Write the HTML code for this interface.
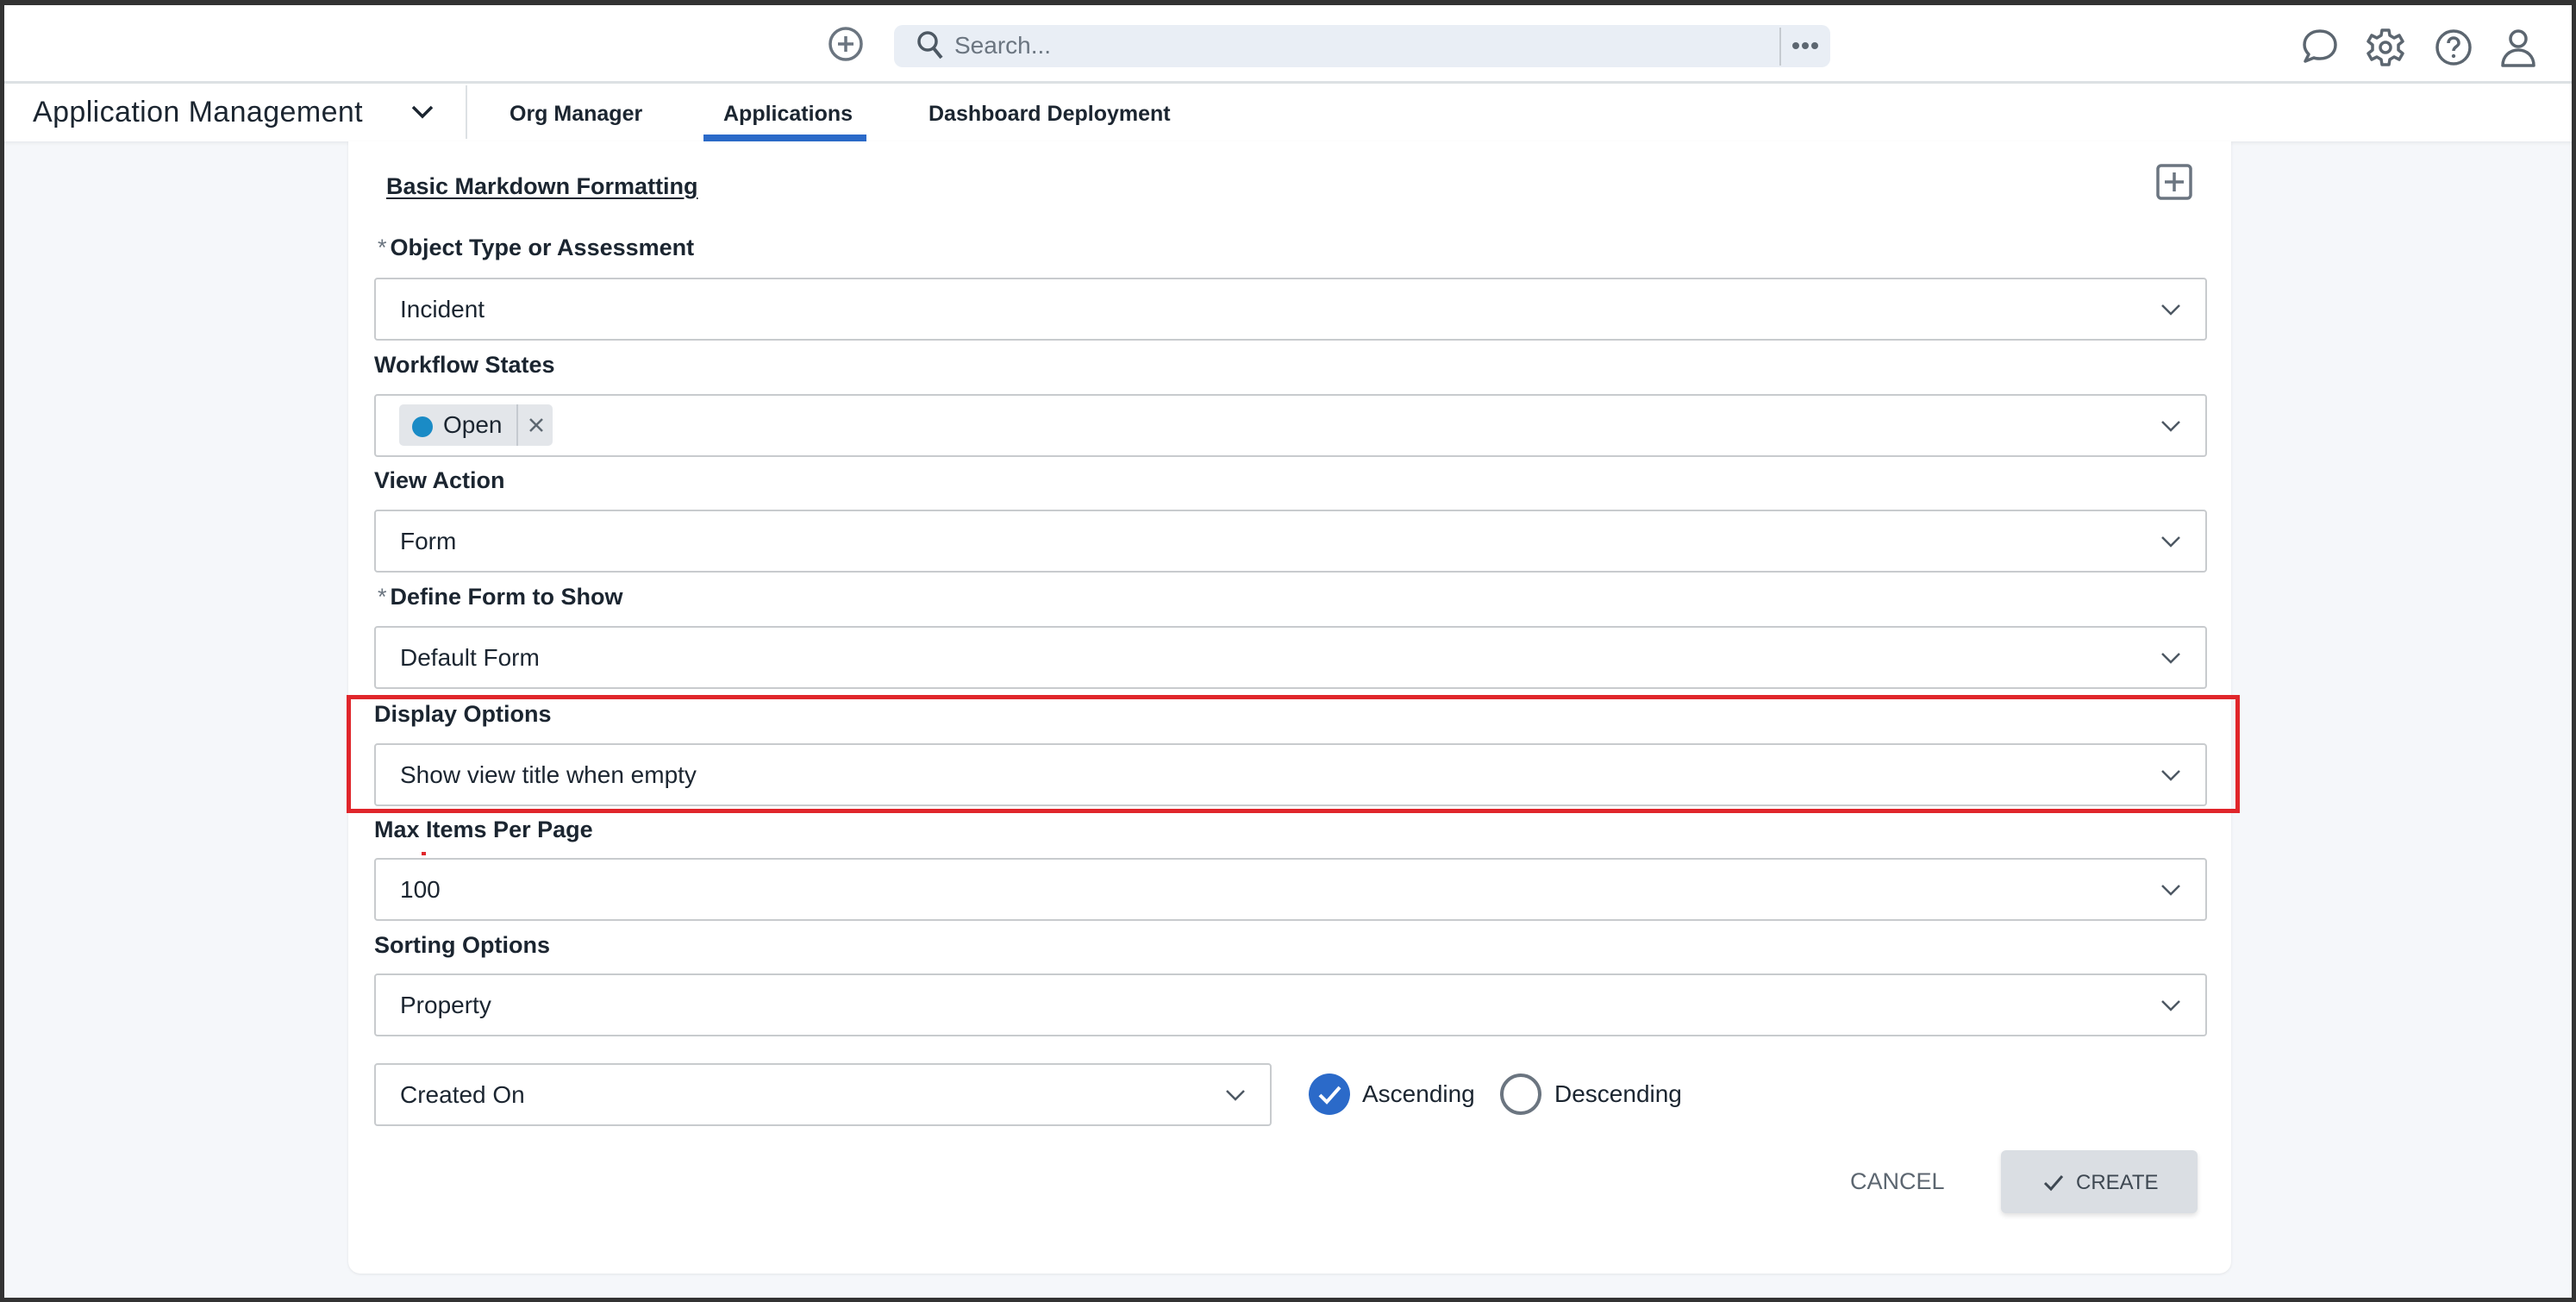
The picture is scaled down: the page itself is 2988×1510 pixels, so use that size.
<!DOCTYPE html>
<html><head><meta charset="utf-8"><style>
*{box-sizing:border-box;margin:0;padding:0}
body{width:2988px;height:1510px;overflow:hidden;font-family:"Liberation Sans",sans-serif;color:#1b2530;background:#f5f7fa;position:relative}
.frame{position:absolute;inset:0;border:5px solid #333;border-top-width:6px;pointer-events:none;z-index:10}
.top{position:absolute;left:0;top:0;width:2988px;height:97px;background:#fff;border-bottom:3px solid #dde1e4}
.nav{position:absolute;left:0;top:97px;width:2988px;height:67px;background:#fff;box-shadow:0 2px 4px rgba(0,0,0,.06)}
.abs{position:absolute}
.card{position:absolute;left:404px;top:164px;width:2184px;height:1313px;background:#fff;border-radius:0 0 14px 14px;box-shadow:0 1px 3px rgba(0,0,0,.08)}
.lbl{position:absolute;left:434px;font-size:27px;font-weight:bold;color:#1b2530}
.inp{position:absolute;left:434px;width:2126px;height:73px;border:2px solid #c8cbce;border-radius:4px;background:#fff}
.inp span.t{position:absolute;left:28px;top:50%;transform:translateY(-50%);font-size:28px;color:#1b2530}
.chev{position:absolute;right:28px;top:50%;transform:translateY(-50%)}
.tab{position:absolute;top:118px;font-size:25px;font-weight:bold;color:#1b2530}
</style></head><body>
<div class="top"></div>
<svg class="abs" style="left:960px;top:30px" width="42" height="42" viewBox="0 0 42 42"><circle cx="21" cy="21" r="18" fill="none" stroke="#6b7580" stroke-width="3.5"/><path d="M21 12v18M12 21h18" stroke="#6b7580" stroke-width="3.5"/></svg>
<div class="abs" style="left:1037px;top:29px;width:1086px;height:49px;background:#e9eef5;border-radius:10px"></div>
<svg class="abs" style="left:1062px;top:34px" width="36" height="38" viewBox="0 0 36 38"><circle cx="14" cy="14" r="10" fill="none" stroke="#4d5863" stroke-width="3.5"/><path d="M21 22l9 11" stroke="#4d5863" stroke-width="4"/></svg>
<div class="abs" style="left:1107px;top:37px;font-size:28px;color:#6b7580">Search...</div>
<div class="abs" style="left:2064px;top:32px;width:2px;height:44px;background:#c5cad0"></div>
<svg class="abs" style="left:2078px;top:46px" width="32" height="14" viewBox="0 0 32 14"><circle cx="5" cy="7" r="4" fill="#5c6670"/><circle cx="16" cy="7" r="4" fill="#5c6670"/><circle cx="27" cy="7" r="4" fill="#5c6670"/></svg>
<svg class="abs" style="left:2667px;top:30px" width="48" height="48" viewBox="0 0 48 48"><path d="M24 6C13 6 6 13 6 22c0 5 2 8 5 11l-4 8 10-4c2 1 5 1 7 1 11 0 18-7 18-16S35 6 24 6z" fill="none" stroke="#5c6670" stroke-width="3.5" stroke-linejoin="round"/></svg>
<svg class="abs" style="left:2744px;top:32px" width="46" height="46" viewBox="0 0 46 46"><path d="M19 3h8l1 6 5 3 6-3 4 7-5 4v6l5 4-4 7-6-3-5 3-1 6h-8l-1-6-5-3-6 3-4-7 5-4v-6l-5-4 4-7 6 3 5-3z" fill="none" stroke="#5c6670" stroke-width="3.5" stroke-linejoin="round"/><circle cx="23" cy="23" r="6" fill="none" stroke="#5c6670" stroke-width="3.5"/></svg>
<svg class="abs" style="left:2823px;top:32px" width="46" height="46" viewBox="0 0 46 46"><circle cx="23" cy="23" r="19" fill="none" stroke="#5c6670" stroke-width="3.5"/><path d="M17 18c0-4 3-6 6-6s6 2 6 6c0 4-6 4-6 9" fill="none" stroke="#5c6670" stroke-width="3.5"/><circle cx="23" cy="33" r="2.2" fill="#5c6670"/></svg>
<svg class="abs" style="left:2899px;top:32px" width="44" height="48" viewBox="0 0 44 48"><circle cx="22" cy="13" r="9" fill="none" stroke="#5c6670" stroke-width="3.5"/><path d="M4 44c0-11 8-18 18-18s18 7 18 18z" fill="none" stroke="#5c6670" stroke-width="3.5" stroke-linejoin="round"/></svg>

<div class="nav"></div>
<div class="abs" style="left:38px;top:111px;font-size:34px;color:#1b2530;letter-spacing:0.4px">Application Management</div>
<svg class="abs" style="left:476px;top:120px" width="28" height="20" viewBox="0 0 28 20"><path d="M3 4l11 11 11-11" fill="none" stroke="#1b2530" stroke-width="3.5"/></svg>
<div class="abs" style="left:540px;top:99px;width:2px;height:62px;background:#dde1e4"></div>
<div class="tab" style="left:591px">Org Manager</div>
<div class="tab" style="left:839px">Applications</div>
<div class="abs" style="left:816px;top:156px;width:189px;height:8px;background:#2b6ac9"></div>
<div class="tab" style="left:1077px">Dashboard Deployment</div>

<div class="card"></div>
<div class="abs" style="left:448px;top:201px;font-size:27px;font-weight:bold;text-decoration:underline;text-underline-offset:4px">Basic Markdown Formatting</div>
<svg class="abs" style="left:2500px;top:189px" width="44" height="44" viewBox="0 0 44 44"><rect x="3" y="3" width="38" height="38" rx="4" fill="none" stroke="#6b7580" stroke-width="3.5"/><path d="M22 11v22M11 22h22" stroke="#6b7580" stroke-width="3.5"/></svg>

<div class="lbl" style="top:272px;left:438px"><span style="font-weight:normal;color:#6b7580;margin-right:4px">*</span>Object Type or Assessment</div>
<div class="inp" style="top:322px"><span class="t">Incident</span><svg class="chev" width="24" height="14" viewBox="0 0 24 14"><path d="M2 2l10 10 10-10" fill="none" stroke="#4d5863" stroke-width="2.5"/></svg></div>

<div class="lbl" style="top:408px">Workflow States</div>
<div class="inp" style="top:457px"><svg class="chev" width="24" height="14" viewBox="0 0 24 14"><path d="M2 2l10 10 10-10" fill="none" stroke="#4d5863" stroke-width="2.5"/></svg>
<div class="abs" style="left:27px;top:10px;width:178px;height:48px;background:#e3e6ea;border-radius:5px"></div>
<div class="abs" style="left:42px;top:24px;width:24px;height:24px;border-radius:50%;background:#1a8bc6"></div>
<div class="abs" style="left:78px;top:18px;font-size:28px">Open</div>
<div class="abs" style="left:163px;top:10px;width:2px;height:48px;background:#c5cad0"></div>
<svg class="abs" style="left:176px;top:24px" width="20" height="20" viewBox="0 0 20 20"><path d="M3 3l14 14M17 3L3 17" stroke="#5c6670" stroke-width="2.5"/></svg></div>

<div class="lbl" style="top:542px">View Action</div>
<div class="inp" style="top:591px"><span class="t">Form</span><svg class="chev" width="24" height="14" viewBox="0 0 24 14"><path d="M2 2l10 10 10-10" fill="none" stroke="#4d5863" stroke-width="2.5"/></svg></div>

<div class="lbl" style="top:677px;left:438px"><span style="font-weight:normal;color:#6b7580;margin-right:4px">*</span>Define Form to Show</div>
<div class="inp" style="top:726px"><span class="t">Default Form</span><svg class="chev" width="24" height="14" viewBox="0 0 24 14"><path d="M2 2l10 10 10-10" fill="none" stroke="#4d5863" stroke-width="2.5"/></svg></div>

<div class="abs" style="left:402px;top:806px;width:2196px;height:137px;border:5px solid #e0262b"></div>
<div class="lbl" style="top:813px">Display Options</div>
<div class="inp" style="top:862px"><span class="t">Show view title when empty</span><svg class="chev" width="24" height="14" viewBox="0 0 24 14"><path d="M2 2l10 10 10-10" fill="none" stroke="#4d5863" stroke-width="2.5"/></svg></div>

<div class="lbl" style="top:947px">Max Items Per Page</div>
<div class="abs" style="left:489px;top:988px;width:5px;height:4px;background:#e0262b"></div>
<div class="inp" style="top:995px"><span class="t">100</span><svg class="chev" width="24" height="14" viewBox="0 0 24 14"><path d="M2 2l10 10 10-10" fill="none" stroke="#4d5863" stroke-width="2.5"/></svg></div>

<div class="lbl" style="top:1081px">Sorting Options</div>
<div class="inp" style="top:1129px"><span class="t">Property</span><svg class="chev" width="24" height="14" viewBox="0 0 24 14"><path d="M2 2l10 10 10-10" fill="none" stroke="#4d5863" stroke-width="2.5"/></svg></div>

<div class="inp" style="top:1233px;width:1041px"><span class="t">Created On</span><svg class="chev" width="24" height="14" viewBox="0 0 24 14"><path d="M2 2l10 10 10-10" fill="none" stroke="#4d5863" stroke-width="2.5"/></svg></div>
<svg class="abs" style="left:1517px;top:1244px" width="50" height="50" viewBox="0 0 50 50"><circle cx="25" cy="25" r="24" fill="#2b6ac9"/><path d="M14 26l8 8 15-17" fill="none" stroke="#fff" stroke-width="4"/></svg>
<div class="abs" style="left:1580px;top:1253px;font-size:28px">Ascending</div>
<svg class="abs" style="left:1739px;top:1244px" width="50" height="50" viewBox="0 0 50 50"><circle cx="25" cy="25" r="22" fill="none" stroke="#6b7580" stroke-width="4"/></svg>
<div class="abs" style="left:1803px;top:1253px;font-size:28px">Descending</div>

<div class="abs" style="left:2146px;top:1355px;font-size:27px;color:#5c6670">CANCEL</div>
<div class="abs" style="left:2321px;top:1334px;width:228px;height:73px;background:#dadee3;border-radius:6px;box-shadow:0 3px 6px rgba(0,0,0,.12)"></div>
<svg class="abs" style="left:2370px;top:1362px" width="24" height="20" viewBox="0 0 24 20"><path d="M2 10l7 7 13-15" fill="none" stroke="#3e4852" stroke-width="3"/></svg>
<div class="abs" style="left:2408px;top:1358px;font-size:24px;color:#3e4852">CREATE</div>
<div class="frame"></div>
</body></html>
